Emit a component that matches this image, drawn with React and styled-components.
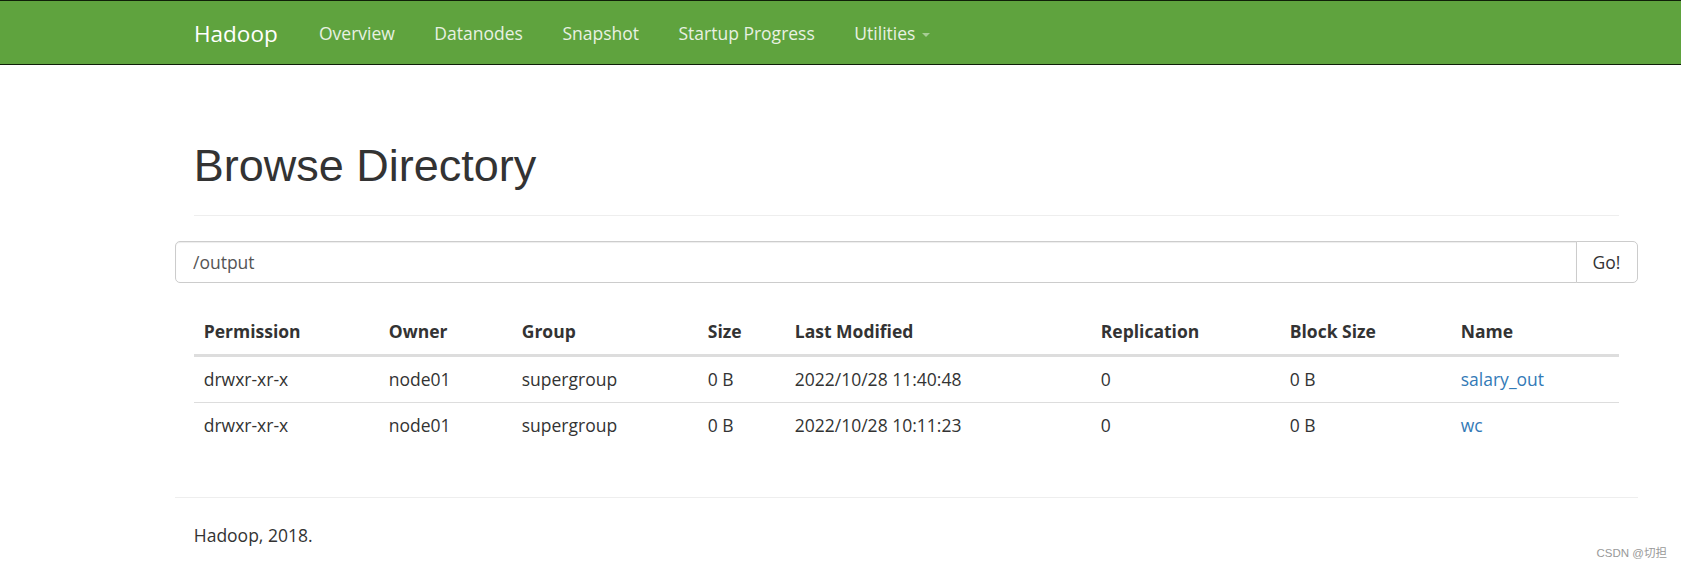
import React from "react";
import styled, { createGlobalStyle } from "styled-components";

const GlobalStyle = createGlobalStyle`
  html, body {
    margin: 0;
    padding: 0;
    background: #fff;
  }
  body {
    font-family: "Open Sans", "Noto Sans", sans-serif;
    font-size: 17.5px;
    line-height: 25px;
    color: #333;
  }
`;

const navItems = ["Overview", "Datanodes", "Snapshot", "Startup Progress"];

const columns = [
  { key: "permission", label: "Permission", width: 185 },
  { key: "owner", label: "Owner", width: 133 },
  { key: "group", label: "Group", width: 186 },
  { key: "size", label: "Size", width: 87 },
  { key: "modified", label: "Last Modified", width: 306 },
  { key: "replication", label: "Replication", width: 189 },
  { key: "blockSize", label: "Block Size", width: 171 },
  { key: "name", label: "Name", width: 168 },
];

const files = [
  {
    permission: "drwxr-xr-x",
    owner: "node01",
    group: "supergroup",
    size: "0 B",
    modified: "2022/10/28 11:40:48",
    replication: "0",
    blockSize: "0 B",
    name: "salary_out",
  },
  {
    permission: "drwxr-xr-x",
    owner: "node01",
    group: "supergroup",
    size: "0 B",
    modified: "2022/10/28 10:11:23",
    replication: "0",
    blockSize: "0 B",
    name: "wc",
  },
];

const App = () => {
  return (
    <Page>
      <GlobalStyle />
      <Navbar>
        <NavInner>
          <Brand href="#">Hadoop</Brand>
          {navItems.map((item) => (
            <NavLink key={item} href="#">{item}</NavLink>
          ))}
          <NavLink href="#">
            Utilities<Caret />
          </NavLink>
        </NavInner>
      </Navbar>

      <Container>
        <PageHeader>
          <Title>Browse Directory</Title>
        </PageHeader>

        <InputGroup>
          <PathInput type="text" defaultValue="/output" />
          <GoButton type="button">Go!</GoButton>
        </InputGroup>

        <Table>
          <colgroup>
            {columns.map((col) => (
              <Col key={col.key} $width={col.width} />
            ))}
          </colgroup>
          <thead>
            <tr>
              {columns.map((col) => (
                <Th key={col.key}>{col.label}</Th>
              ))}
            </tr>
          </thead>
          <tbody>
            {files.map((file) => (
              <tr key={file.name}>
                {columns.map((col) => (
                  <Td key={col.key}>
                    {col.key === "name" ? (
                      <FileLink href="#">{file.name}</FileLink>
                    ) : (
                      file[col.key]
                    )}
                  </Td>
                ))}
              </tr>
            ))}
          </tbody>
        </Table>

        <FooterRule />
        <Footer>Hadoop, 2018.</Footer>
      </Container>

      <Watermark>CSDN @切担</Watermark>
    </Page>
  );
};

const Page = styled.div`
  position: relative;
  min-height: 577px;
`;

const Navbar = styled.nav`
  background-color: #5fa33e;
  border-top: 1px solid #0f1f08;
  border-bottom: 1px solid #0f1f08;
  height: 62.5px;
`;

const NavInner = styled.div`
  display: flex;
  align-items: flex-start;
  height: 100%;
  margin-left: 194px;
`;

const Brand = styled.a`
  display: block;
  padding: 19.75px 21.5px 17.75px 0;
  font-size: 22.5px;
  line-height: 25px;
  color: #fff;
  text-decoration: none;
`;

const NavLink = styled.a`
  display: block;
  padding: 19.75px 19.75px 17.75px;
  font-size: 17.5px;
  line-height: 25px;
  color: #e8f1e2;
  text-decoration: none;
`;

const Caret = styled.span`
  display: inline-block;
  width: 0;
  height: 0;
  margin-left: 7px;
  vertical-align: middle;
  border-top: 4px solid rgba(255, 255, 255, 0.45);
  border-left: 4px solid transparent;
  border-right: 4px solid transparent;
`;

const Container = styled.div`
  width: 1425px;
  margin-left: 175px;
  padding: 76px 18.75px 0;
`;

const PageHeader = styled.div`
  padding-bottom: 13px;
  margin-bottom: 25.5px;
  border-bottom: 1px solid #eee;
`;

const Title = styled.h1`
  margin: 0 0 11.5px;
  font-family: "Liberation Sans", Arial, sans-serif;
  font-size: 45px;
  font-weight: 400;
  line-height: 49.5px;
  color: #333;
`;

const InputGroup = styled.div`
  display: flex;
  margin: 0 -18.75px 26px;
  height: 42px;
`;

const PathInput = styled.input`
  flex: 1;
  min-width: 0;
  box-sizing: border-box;
  height: 42px;
  padding: 0 17px;
  border: 1px solid #ccc;
  border-radius: 5px 0 0 5px;
  font-family: "Open Sans", "Noto Sans", sans-serif;
  font-size: 17.5px;
  color: #555;
  box-shadow: inset 0 1px 1px rgba(0, 0, 0, 0.075);
  outline: none;
`;

const GoButton = styled.button`
  box-sizing: border-box;
  width: 62px;
  height: 42px;
  margin-left: -1px;
  border: 1px solid #ccc;
  border-radius: 0 5px 5px 0;
  background: #fff;
  font-family: "Open Sans", "Noto Sans", sans-serif;
  font-size: 17.5px;
  color: #333;
  cursor: pointer;
`;

const Table = styled.table`
  width: 100%;
  table-layout: fixed;
  border-collapse: collapse;
  margin-bottom: 49px;
`;

const Col = styled.col`
  width: ${(props) => props.$width}px;
`;

const Th = styled.th`
  padding: 10px;
  text-align: left;
  font-weight: 700;
  line-height: 25px;
  border-bottom: 3px solid #ddd;
`;

const Td = styled.td`
  padding: 10px;
  line-height: 25px;
  border-top: 1px solid #ddd;
  white-space: nowrap;
`;

const FileLink = styled.a`
  color: #337ab7;
  text-decoration: none;
`;

const FooterRule = styled.hr`
  margin: 0 -18.75px 25px;
  border: 0;
  border-top: 1px solid #eee;
`;

const Footer = styled.p`
  margin: 0 0 12.5px;
`;

const Watermark = styled.span`
  position: absolute;
  right: 14px;
  bottom: 17px;
  font-family: "Liberation Sans", "Noto Sans CJK SC", sans-serif;
  font-size: 11.5px;
  line-height: 14px;
  color: #999;
`;

export default App;
